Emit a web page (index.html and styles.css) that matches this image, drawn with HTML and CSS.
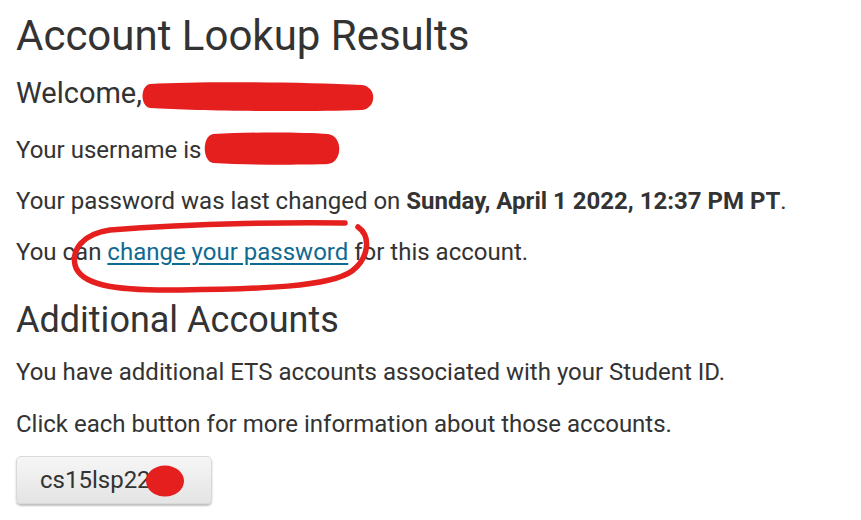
FILE: index.html
```html
<!DOCTYPE html>
<html>
<head>
<meta charset="utf-8">
<link rel="stylesheet" href="styles.css">
</head>
<body>
<main class="page">
  <h1 class="title">Account Lookup Results</h1>
  <p class="welcome">Welcome,<span class="blank-wide"></span></p>
  <p class="line first">Your username is <span class="blank-user"></span></p>
  <p class="line">Your password was last changed on <strong>Sunday, April 1 2022, 12:37 PM PT</strong>.</p>
  <p class="line">You can <a class="link" href="#">change your password</a> for this account.</p>
  <h2 class="subtitle">Additional Accounts</h2>
  <p class="line after-sub">You have additional ETS accounts associated with your Student ID.</p>
  <p class="line last">Click each button for more information about those accounts.</p>
  <button class="acct-btn" type="button">cs15lsp22<span class="blank-btn"></span></button>
</main>
<svg class="scribble" width="861" height="520" viewBox="0 0 861 520">
  <path d="M150 84 C 200 81, 300 82, 362 85 C 377 87, 377 108, 362 110 C 300 112, 200 111, 150 108 C 140 106, 140 86, 150 84 Z" fill="#e51e1e"/>
  <path d="M213 134 C 250 132, 300 132, 328 134 C 343 136, 343 162, 328 164 C 300 165, 250 165, 213 163 C 202 161, 202 136, 213 134 Z" fill="#e51e1e"/>
  <ellipse cx="165" cy="481" rx="19" ry="15.5" fill="#e51e1e"/>
  <path d="M345 223 C 300 222, 200 223, 110 230 C 82 234, 72 250, 75 265 C 80 284, 110 291, 180 290 C 260 289, 330 287, 352 271 C 368 259, 372 237, 358 227" fill="none" stroke="#e51e1e" stroke-width="5.5" stroke-linecap="round"/>
</svg>
</body>
</html>
```
FILE: styles.css
```css
html, body {
  margin: 0;
  padding: 0;
  background: #ffffff;
}
body {
  font-family: Roboto, "Liberation Sans", sans-serif;
  color: #333333;
  position: relative;
  width: 861px;
  height: 520px;
  overflow: hidden;
}
.page {
  padding: 12px 16px 0 16px;
  display: flex;
  flex-direction: column;
  align-items: flex-start;
}
.title {
  font-size: 42px;
  font-weight: 400;
  line-height: 48px;
  margin: 0 0 15px 0;
}
.welcome {
  font-size: 29px;
  line-height: 36px;
  margin: 0 0 24px 0;
}
.line {
  font-size: 24px;
  line-height: 30px;
  margin: 0 0 21px 0;
}
.line.after-sub {
  margin-bottom: 22px;
}
.line.last {
  margin-bottom: 17px;
}
.line strong {
  font-weight: 700;
}
.link {
  color: #0f6a92;
  text-decoration: underline;
  text-underline-offset: 3px;
}
.subtitle {
  font-size: 36px;
  font-weight: 400;
  line-height: 42px;
  margin: 11px 0 16px 0;
}
.blank-wide, .blank-user, .blank-btn {
  display: inline-block;
}
.acct-btn {
  font-family: Roboto, "Liberation Sans", sans-serif;
  font-size: 24px;
  color: #333333;
  width: 196px;
  height: 48px;
  border: 1px solid #d9d9d9;
  border-radius: 5px;
  background: linear-gradient(#f6f6f6, #e4e4e4);
  box-shadow: 0 2px 2px rgba(0,0,0,0.25);
  text-align: left;
  padding: 0 0 0 23px;
  margin: 0;
}
.scribble {
  position: absolute;
  left: 0;
  top: 0;
  pointer-events: none;
}
```
